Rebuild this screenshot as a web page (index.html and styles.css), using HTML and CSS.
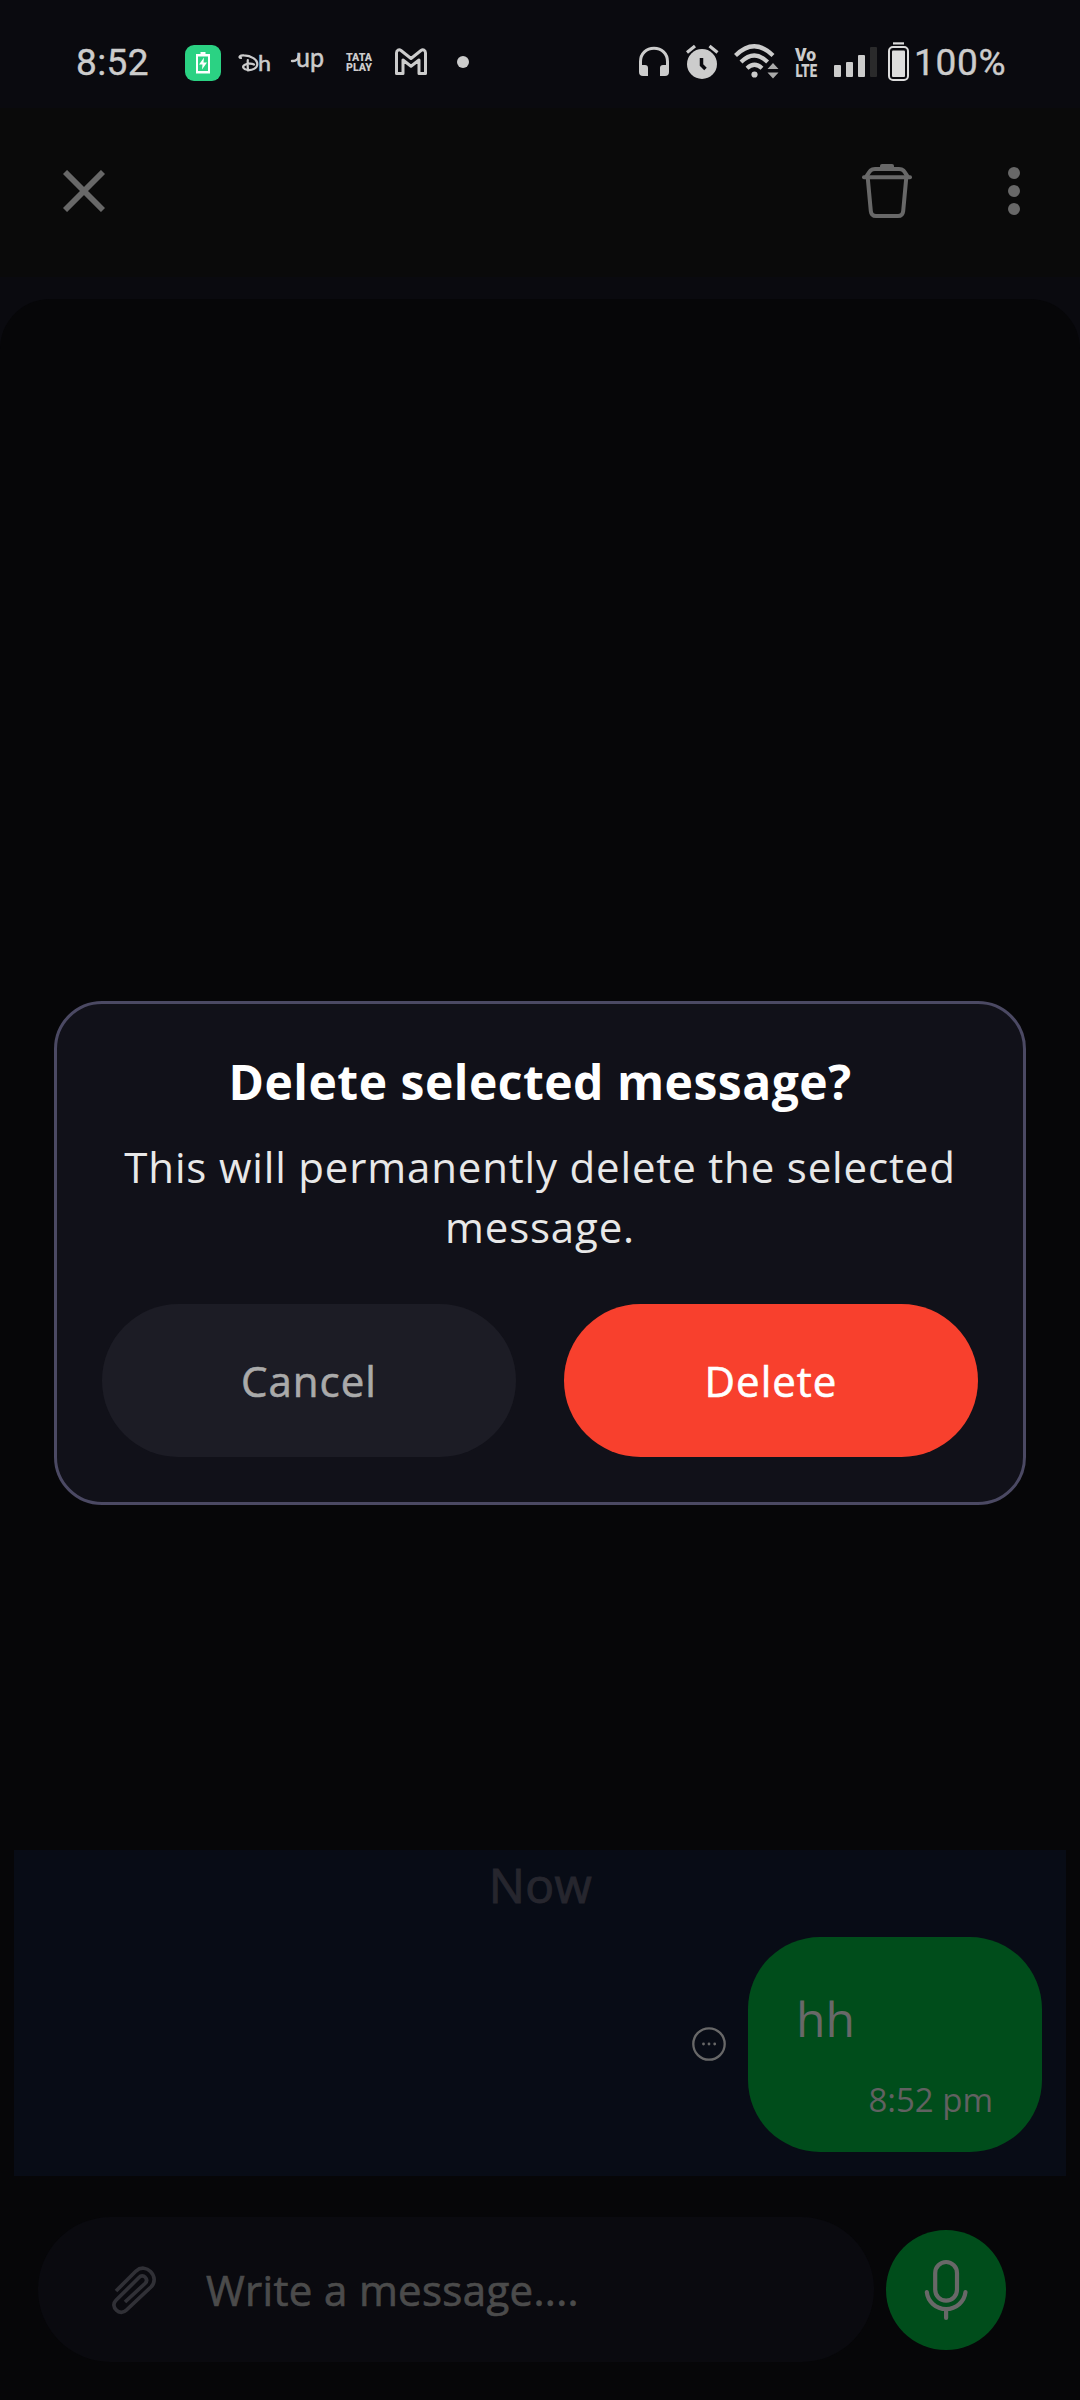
FILE: index.html
```html
<!DOCTYPE html>
<html lang="en">
<head>
<meta charset="utf-8">
<title>Messages</title>
<link rel="stylesheet" href="styles.css">
</head>
<body>
<div class="screen">
  <div class="status">
    <span class="clock">8:52</span>
    <svg class="ic app" width="36" height="50" viewBox="185 38 36 50"><rect x="185" y="45" width="36" height="36" rx="9" fill="#2bd283"/><path d="M200.500 52h5v2h4.500v19.500h-14v-19.500h4.500z" fill="#fff"/><rect x="198" y="56.500" width="10" height="14.500" fill="#2bd283"/><path d="M204 57.500l-5 7h3.500l-.5 5 5-7h-3.500z" fill="#fff"/></svg>
    <svg class="ic dh" width="33" height="50" viewBox="238 38 33 50"><path d="M241 58c-3-.5-1-3 3-2.600c7 .3 13.500 4 13.300 8.800c-.2 4-5.300 6.500-9.800 5.800c-4.500-.6-5.500-3.500-3-5c2.500-1.500 7-1.800 9.500-.5M247.800 60c-.3 3.500-.2 7 .3 10.500" fill="none" stroke="#ccc" stroke-width="2.200" stroke-linecap="round"/><text class="glyph logo-text" x="258" y="70.800" font-size="21" textLength="13" lengthAdjust="spacingAndGlyphs">h</text></svg>
    <svg class="ic up" width="34" height="50" viewBox="290 38 34 50"><path d="M292 61c4 .5 6.500-2 7-6" fill="none" stroke="#ccc" stroke-width="2.400" stroke-linecap="round"/><text class="glyph logo-text" x="296" y="67" font-size="26" textLength="28" lengthAdjust="spacingAndGlyphs">up</text></svg>
    <svg class="ic tata" width="28" height="50" viewBox="345 38 28 50"><text class="glyph heavy" x="346" y="61" font-size="10" textLength="26" lengthAdjust="spacingAndGlyphs">TATA</text><text class="glyph heavy" x="346" y="71" font-size="10" textLength="26" lengthAdjust="spacingAndGlyphs">PLAY</text></svg>
    <svg class="ic mail" width="34" height="50" viewBox="394 38 34 50"><path d="M396.500 73.500v-20.500c0-3 2.500-4 4.500-2.500l10 8 10-8c2-1.500 4.500-.5 4.500 2.500v20.500h-6.500v-13.500l-8 6.200-8-6.200v13.500z" fill="none" stroke="#ccc" stroke-width="3" stroke-linejoin="round"/></svg>
    <svg class="ic dot" width="12" height="50" viewBox="457 38 12 50"><circle cx="463" cy="62" r="6" fill="#ccc"/></svg>
    <div class="system">
      <svg class="ic" width="30" height="50" viewBox="639 38 30 50"><path d="M640.500 66v-4.500c0-8 6-13.300 13.500-13.300s13.500 5.300 13.500 13.300v4.500" fill="none" stroke="#ccc" stroke-width="3"/><path d="M639 65h6a3 3 0 0 1 3 3v8h-5a4 4 0 0 1-4-4zM669 65h-6a3 3 0 0 0-3 3v8h5a4 4 0 0 0 4-4z" fill="#ccc"/></svg>
      <svg class="ic alarm" width="33" height="50" viewBox="686 38 33 50"><circle cx="702" cy="64" r="15" fill="#ccc"/><path d="M687 52.500l8-6.500M717.500 52.500l-8-6.500" stroke="#ccc" stroke-width="3.200"/><path d="M701.500 58v7l4 4" fill="none" stroke="#0a0a0f" stroke-width="3.500"/></svg>
      <svg class="ic wifi" width="45" height="50" viewBox="734 38 45 50"><g fill="none" stroke="#ccc" stroke-width="4.200"><path d="M735.500 55.500q18.700-18.500 37.500 0M741 62q13.300-13 26.600 0M747 68.300q7.500-7 15 0"/></g><circle cx="754.500" cy="74.500" r="3.100" fill="#ccc"/><path d="M767.500 69l5.500-6 5.500 6zM767.500 72.500h11l-5.500 6z" fill="#aaa"/></svg>
      <svg class="ic volte" width="23" height="50" viewBox="795 38 23 50"><text class="glyph heavy" x="795" y="60.500" font-size="18" textLength="21" lengthAdjust="spacingAndGlyphs">Vo</text><text class="glyph heavy" x="795.500" y="76.500" font-size="19" textLength="21.500" lengthAdjust="spacingAndGlyphs">LTE</text></svg>
      <svg class="ic signal" width="43" height="50" viewBox="834 38 43 50"><g fill="#ccc"><rect x="834" y="65" width="7" height="12" rx="1"/><rect x="846" y="62" width="7" height="15" rx="1"/><rect x="858" y="55" width="7" height="22" rx="1"/></g><rect x="870" y="47" width="7" height="30" rx="1" fill="#2a2a2b"/></svg>
      <svg class="ic batt" width="21" height="50" viewBox="888 38 21 50"><path d="M893 42.300h11v2.200h-11z" fill="#ddd"/><rect x="889" y="47" width="19" height="33" rx="4" fill="none" stroke="#ddd" stroke-width="2"/><rect x="892" y="50.500" width="13" height="26.500" rx="1" fill="#ddd"/></svg>
      <span class="percent">100%</span>
    </div>
  </div>

  <div class="toolbar">
    <svg class="close" width="42" height="42" viewBox="0 0 42 42"><path d="M2 2l38 38M40 2L2 40" stroke="#686868" stroke-width="5.800"/></svg>
    <svg class="trash" width="50" height="54" viewBox="0 0 50 54"><g fill="none" stroke="#686868" stroke-width="4" stroke-linecap="round" stroke-linejoin="round"><path d="M2 13.300h46"/><path d="M5.800 14.500l3 32.500q.5 5 5.200 5h22q4.700 0 5.200-5l3-32.500"/><path d="M4.500 12.500c3-5 4-7.500 8.500-7.500h24c4.500 0 5.500 2.500 8.500 7.500"/></g><path d="M18 5v-3q0-2 2-2h10q2 0 2 2v3z" fill="#686868"/></svg>
    <svg width="12" height="48" viewBox="0 0 12 48" fill="#686868"><circle cx="6" cy="6" r="6"/><circle cx="6" cy="24" r="6"/><circle cx="6" cy="42" r="6"/></svg>
  </div>

  <div class="chat">
    <div class="selected">
      <div class="day">Now</div>
      <div class="row">
        <svg class="pending" width="34" height="34" viewBox="0 0 34 34"><circle cx="17" cy="17" r="15.700" fill="none" stroke="#686868" stroke-width="2.300"/><g fill="#686868"><circle cx="11.500" cy="17" r="1.400"/><circle cx="17" cy="17" r="1.400"/><circle cx="22.700" cy="17" r="1.400"/></g></svg>
        <div class="bubble">
          <div class="text">hh</div>
          <div class="time">8:52 pm</div>
        </div>
      </div>
    </div>
    <div class="composer">
      <div class="field">
        <svg width="46" height="50" viewBox="111 2265 46 50"><path d="M116 2291l20-20c5-4.500 11-3 14.500.5c4.500 4.500 5 11 .5 15.500L126.500 2310c-3 3-7.500 3-10 .3c-3.300-3.300-3.500-7-.5-10L139 2277.500c2-2 4.500-2 6-.5c2 2 2 4.500 0 6.500L125 2302" fill="none" stroke="#303036" stroke-width="3.700"/></svg>
        <span class="placeholder">Write a message....</span>
      </div>
      <div class="mic">
        <svg width="44" height="62" viewBox="923 2259 44 62" fill="none" stroke="#686868" stroke-width="4.200" stroke-linecap="round"><rect x="934.200" y="2262" width="21.800" height="38.700" rx="10.900"/><path d="M925.800 2292c1 9.500 9 17 19.300 17s18.300-7.500 19.400-17M945.100 2309v9"/></svg>
      </div>
    </div>
  </div>

  <div class="overlay">
    <div class="dialog">
      <h1 class="title">Delete selected message?</h1>
      <p class="body">This will permanently delete the selected message.</p>
      <div class="actions">
        <div class="btn cancel">Cancel</div>
        <div class="btn delete">Delete</div>
      </div>
    </div>
  </div>
</div>
</body>
</html>
```
FILE: styles.css
```css
* { box-sizing: border-box; }
body { margin: 0; background: #0a0a0f; }
.screen {
  position: relative;
  width: 1080px;
  height: 2400px;
  display: flex;
  flex-direction: column;
  overflow: hidden;
  font-family: "Open Sans", "Noto Sans", sans-serif;
}
svg { display: block; flex: none; }

.status {
  height: 108px;
  padding: 0 74px 0 76px;
  display: flex;
  align-items: flex-start;
  color: #ccc;
  font: 400 37px/50px Roboto, sans-serif;
}
.clock { width: 72px; padding-top: 38px; white-space: nowrap; letter-spacing: 0.4px; -webkit-text-stroke: 0.4px; }
.ic { margin-top: 38px; }
.app { margin-left: 37px; }
.dh { margin-left: 17px; }
.up { margin-left: 19px; }
.tata { margin-left: 21px; }
.mail { margin-left: 21px; }
.dot { margin-left: 29px; }
.system { display: flex; margin-left: 170px; }
.alarm { margin-left: 17px; }
.wifi { margin-left: 15px; }
.volte { margin-left: 16px; overflow: visible; }
.signal { margin-left: 16px; }
.batt { margin-left: 11px; }
.percent { padding-top: 38px; margin-left: 5px; white-space: nowrap; letter-spacing: 0.7px; -webkit-text-stroke: 0.4px; }
.glyph { fill: #ccc; font-family: Lato, sans-serif; }
.logo-text { stroke: #ccc; stroke-width: 0.5px; }
.heavy { font-family: Roboto, sans-serif; font-weight: 900; }

.toolbar {
  height: 169px;
  padding: 0 60px 4px 63px;
  display: flex;
  align-items: center;
  background: #0a0a0a;
}
.trash { margin-left: auto; margin-right: 96px; }

.chat {
  flex: 1;
  margin-top: 22px;
  border-radius: 50px 50px 0 0;
  background: #060608;
  display: flex;
  flex-direction: column;
  justify-content: flex-end;
}
.selected {
  height: 326px;
  margin: 0 14px;
  padding-right: 24px;
  background: #080c16;
}
.day {
  padding-left: 25px;
  height: 87px;
  text-align: center;
  color: #26262e;
  font-size: 48px;
  line-height: 70px;
  letter-spacing: 0.4px;
  -webkit-text-stroke: 1px;
}
.row { display: flex; justify-content: flex-end; align-items: center; gap: 22px; }
.pending { margin-bottom: 1px; }
.bubble {
  width: 294px;
  height: 215px;
  padding: 49px 49px 0 48px;
  border-radius: 72px;
  background: #004d1b;
  color: #686868;
}
.text { font-size: 48px; line-height: 66px; }
.time { margin-top: 25px; text-align: right; font-size: 33px; line-height: 46px; color: #616161; white-space: nowrap; }

.composer { height: 224px; padding: 41px 74px 38px 38px; display: flex; gap: 12px; align-items: center; }
.field {
  flex: 1;
  height: 145px;
  padding-left: 73px;
  border-radius: 73px;
  background: #0a0a0f;
  display: flex;
  align-items: center;
  gap: 49px;
}
.placeholder { font-size: 42px; line-height: 60px; color: #4b4b4b; letter-spacing: 0.33px; -webkit-text-stroke: 0.7px; }
.mic {
  width: 120px;
  height: 120px;
  border-radius: 50%;
  background: #004d1b;
  display: flex;
  align-items: center;
  justify-content: center;
}

.overlay { position: absolute; inset: 0; padding: 1001px 54px 0; }
.dialog {
  height: 504px;
  padding: 45px 45px 0;
  border: 3px solid #4b4963;
  border-radius: 48px;
  background: #111119;
  text-align: center;
}
.title { margin: 0; color: #fff; font-size: 48px; line-height: 66px; font-weight: 700; letter-spacing: 0.5px; white-space: nowrap; }
.body { margin: 22px 0 0; color: #e8e8e8; font-size: 42px; line-height: 60px; letter-spacing: 0.83px; }
.actions { display: flex; gap: 48px; margin-top: 47px; }
.btn {
  flex: 1;
  height: 153px;
  border-radius: 77px;
  font-size: 42px;
  line-height: 153px;
  letter-spacing: 1px;
  -webkit-text-stroke: 0.6px;
}
.cancel { background: #1c1c25; color: #aaa; }
.delete { background: #f8402d; color: #fff; }
```
